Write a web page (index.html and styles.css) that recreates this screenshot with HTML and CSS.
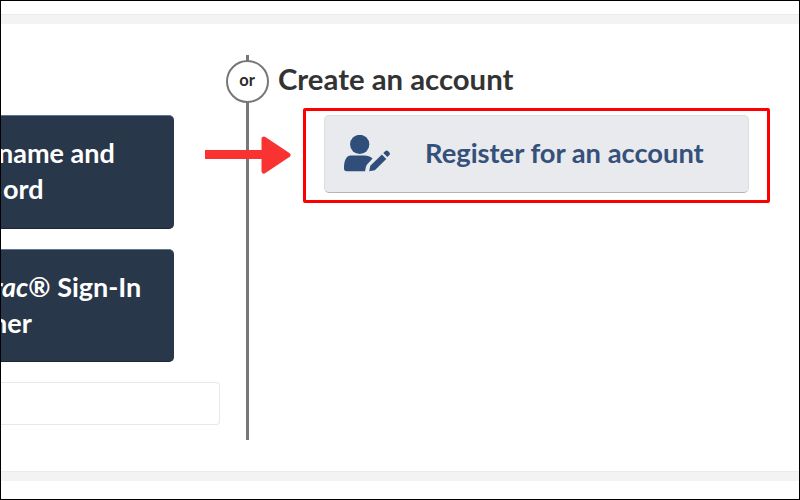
FILE: index.html
```html
<!DOCTYPE html>
<html lang="en">
<head>
  <meta charset="UTF-8">
  <title>Sign in</title>
  <link rel="stylesheet" href="styles.css">
</head>
<body>
  <div class="frame">
    <div class="band"></div>

    <div class="main">
      <div class="left">
        <div class="dark-button">
          <div class="line-name">name and</div>
          <div class="line-ord">ord</div>
        </div>
        <div class="dark-button">
          <div class="line-trac"><em>rac</em>® Sign-In</div>
          <div class="line-ner">ner</div>
        </div>
        <div class="input-box"></div>
      </div>

      <div class="divider">
        <div class="or">or</div>
      </div>

      <div class="right">
        <h2 class="title">Create an account</h2>
        <div class="highlight">
          <div class="register">
            <svg class="register-icon" width="46" height="37" viewBox="0 0 46 37">
              <circle cx="15.7" cy="9.4" r="9.6"/>
              <path d="M6.500 20.400h13.800c3.400 0 6.300 1.200 8.300 3.200l-5.300 5.700c-.7.7-1.200 1.600-1.400 2.600l-.9 4.400H2.500C1 36.300 0 35.300 0 33.800c0-2.300 0-3.300.3-5.300.7-4.800 3.200-8.100 6.200-8.100z"/>
              <path d="M25.200 36.300l1.100-5.600 11.600-11.300 4.400 4.500-11.500 11.300z"/>
              <path d="M39.300 18l2.100-2c.8-.8 1.800-.8 2.600 0l1.400 1.400c.8.8.8 1.800 0 2.600l-2.100 2z"/>
            </svg>
            <span class="register-text">Register for an account</span>
          </div>
        </div>
      </div>

      <svg class="arrow" width="86" height="38" viewBox="0 0 86 38">
        <rect x="0" y="14" width="60" height="9"/>
        <path class="arrow-head" d="M59 3l24 16-24 16z"/>
      </svg>
    </div>

    <div class="band"></div>
  </div>
</body>
</html>
```

FILE: styles.css
```css
* {
  box-sizing: border-box;
}
body {
  margin: 0;
  font-family: "Lato", "Liberation Sans", sans-serif;
}
.frame {
  width: 800px;
  height: 500px;
  padding-top: 13px;
  background-color: #fff;
  border: 1px solid #000;
  overflow: hidden;
}
.band {
  height: 10px;
  background-color: #f3f3f3;
  border-top: 1px solid #ebebeb;
}
.main {
  position: relative;
  display: flex;
  height: 447px;
}
.left {
  flex: none;
  width: 219px;
  padding-top: 91px;
}
.dark-button {
  width: 173px;
  height: 113.5px;
  margin-bottom: 20px;
  padding-top: 19px;
  background-color: #283749;
  border-top: 1px solid #5f7690;
  border-bottom: 1px solid #1c2733;
  border-radius: 0 5px 5px 0;
  color: #fff;
  font-size: 27px;
  font-weight: 700;
  line-height: 36px;
}
.line-name {
  margin-left: -3px;
}
.line-ord {
  margin-left: 2px;
}
.line-trac {
  margin-left: -8px;
}
.line-ner {
  margin-left: -9px;
}
.input-box {
  height: 43px;
  background-color: #fff;
  border: 1px solid #e8e8e8;
  border-left: 0;
  border-radius: 0 4px 4px 0;
}
.divider {
  position: relative;
  flex: none;
  width: 3px;
  height: 385px;
  margin: 31px 0 0 26px;
  background-color: #777;
}
.or {
  position: absolute;
  top: 4.5px;
  left: -20.5px;
  width: 43px;
  height: 43px;
  background-color: #fff;
  border: 2.5px solid #777;
  border-radius: 50%;
  color: #2c2c2c;
  font-size: 16.5px;
  font-weight: 700;
  line-height: 36px;
  text-align: center;
}
.right {
  flex: none;
  width: 500px;
  margin-left: 29px;
  padding-top: 38px;
}
.title {
  margin: 0;
  color: #333;
  font-size: 29.3px;
  font-weight: 700;
  line-height: 34px;
}
.highlight {
  width: 467px;
  height: 95px;
  margin: 12px 0 0 25px;
  padding: 4px 0 0 18px;
  border: 3px solid #f00;
  border-radius: 2px;
}
.register {
  display: flex;
  align-items: center;
  width: 425px;
  height: 78px;
  padding: 0 0 1px 19px;
  background-color: #e8eaed;
  border: 1px solid #dcdde0;
  border-bottom-color: #b5b5b5;
  border-radius: 5px;
}
.register-icon {
  flex: none;
  fill: #2f4f7a;
}
.register-text {
  margin: 0 0 2px 35px;
  color: #35507a;
  font-size: 27.3px;
  font-weight: 700;
}
.arrow {
  position: absolute;
  top: 112px;
  left: 204px;
  fill: #f93232;
}
.arrow-head {
  stroke: #f93232;
  stroke-width: 5px;
  stroke-linejoin: round;
}
```
